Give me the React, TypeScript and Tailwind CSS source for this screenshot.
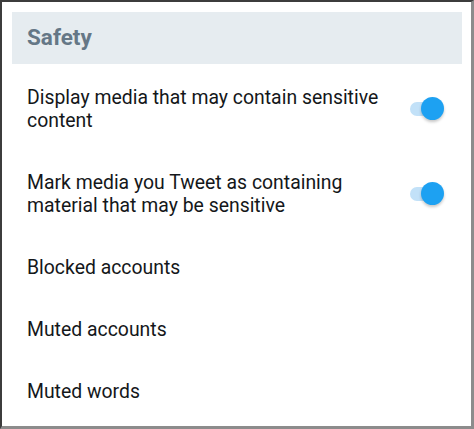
import React from 'react';

const Toggle: React.FC = () => (
  <div className="relative w-[34px] h-[24px] shrink-0">
    <div className="absolute left-0 top-[5px] w-[32px] h-[14px] rounded-full bg-[#c2e1f8]" />
    <div className="absolute right-0 top-0 w-[23px] h-[23px] rounded-full bg-[#1da1f2] shadow-[0_2px_3px_rgba(0,0,0,0.22)]" />
  </div>
);

interface RowProps {
  label: React.ReactNode;
  toggle?: boolean;
}

const Row: React.FC<RowProps> = ({ label, toggle }) => (
  <div className="flex items-center justify-between pl-[25px] pr-[27px] py-[19.5px]">
    <div className="text-[19.4px] leading-[23px] text-[#14171a]">{label}</div>
    {toggle && <Toggle />}
  </div>
);

export default function App() {
  return (
    <div
      className="w-[474px] h-[429px] bg-white border-l-2 border-t-2 border-l-[#3c3c3c] border-t-[#3c3c3c] border-r-[3px] border-b-[3px] border-r-[#8c8c8c] border-b-[#8c8c8c] overflow-hidden"
      style={{ fontFamily: 'Roboto, "Noto Sans", sans-serif' }}
    >
      <div className="mt-[10px] ml-[10px] mr-[9px] h-[52px] bg-[#e6ecf0] flex items-center pl-[15px]">
        <span className="text-[22.5px] font-bold text-[#657786]">Safety</span>
      </div>
      <div className="pt-[2px]">
        <Row
          toggle
          label={
            <>
              Display media that may contain sensitive
              <br />
              content
            </>
          }
        />
        <Row
          toggle
          label={
            <>
              Mark media you Tweet as containing
              <br />
              material that may be sensitive
            </>
          }
        />
        <Row label="Blocked accounts" />
        <Row label="Muted accounts" />
        <Row label="Muted words" />
      </div>
    </div>
  );
}
